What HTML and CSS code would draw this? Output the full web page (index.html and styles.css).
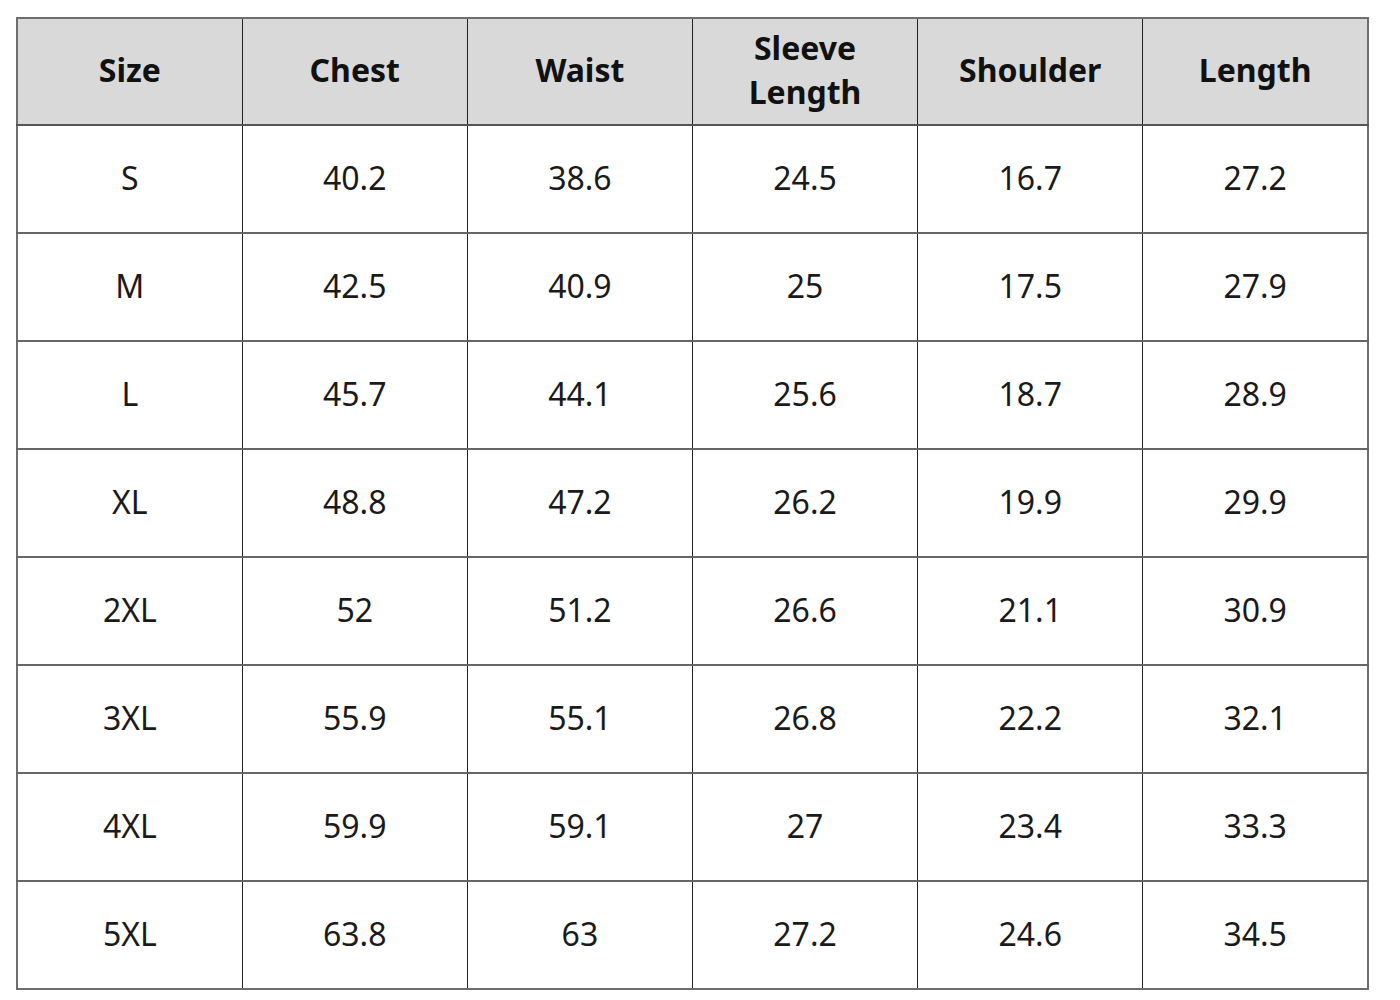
FILE: index.html
```html
<!DOCTYPE html>
<html>
<head>
<meta charset="utf-8">
<link rel="stylesheet" href="styles.css">
</head>
<body>
<table class="size-table">
  <thead>
    <tr><th>Size</th><th>Chest</th><th>Waist</th><th>Sleeve<br>Length</th><th>Shoulder</th><th>Length</th></tr>
  </thead>
  <tbody>
    <tr><td>S</td><td>40.2</td><td>38.6</td><td>24.5</td><td>16.7</td><td>27.2</td></tr>
    <tr><td>M</td><td>42.5</td><td>40.9</td><td>25</td><td>17.5</td><td>27.9</td></tr>
    <tr><td>L</td><td>45.7</td><td>44.1</td><td>25.6</td><td>18.7</td><td>28.9</td></tr>
    <tr><td>XL</td><td>48.8</td><td>47.2</td><td>26.2</td><td>19.9</td><td>29.9</td></tr>
    <tr><td>2XL</td><td>52</td><td>51.2</td><td>26.6</td><td>21.1</td><td>30.9</td></tr>
    <tr><td>3XL</td><td>55.9</td><td>55.1</td><td>26.8</td><td>22.2</td><td>32.1</td></tr>
    <tr><td>4XL</td><td>59.9</td><td>59.1</td><td>27</td><td>23.4</td><td>33.3</td></tr>
    <tr><td>5XL</td><td>63.8</td><td>63</td><td>27.2</td><td>24.6</td><td>34.5</td></tr>
  </tbody>
</table>
</body>
</html>
```
FILE: styles.css
```css
html, body {
  margin: 0;
  padding: 0;
  background: #fff;
}
body {
  padding: 17px 0 0 16px;
  font-family: "Noto Sans", "Open Sans", sans-serif;
  color: #111;
}
.size-table {
  border-collapse: collapse;
  table-layout: fixed;
  width: 1353px;
  border: 2px solid #6e6e6e;
}
.size-table th,
.size-table td {
  border: 1px solid #222;
  text-align: center;
  vertical-align: middle;
  padding: 0 0 3px 0;
  height: 103px;
}
.size-table th {
  background: #d9d9d9;
  font-weight: 700;
  font-size: 32px;
  line-height: 44px;
  color: #111;
  height: 102px;
  border-bottom: 2px solid #555;
}
.size-table td {
  font-size: 32px;
  font-weight: 400;
  color: #1a1a1a;
  border-top: 2px solid #666;
}
```
